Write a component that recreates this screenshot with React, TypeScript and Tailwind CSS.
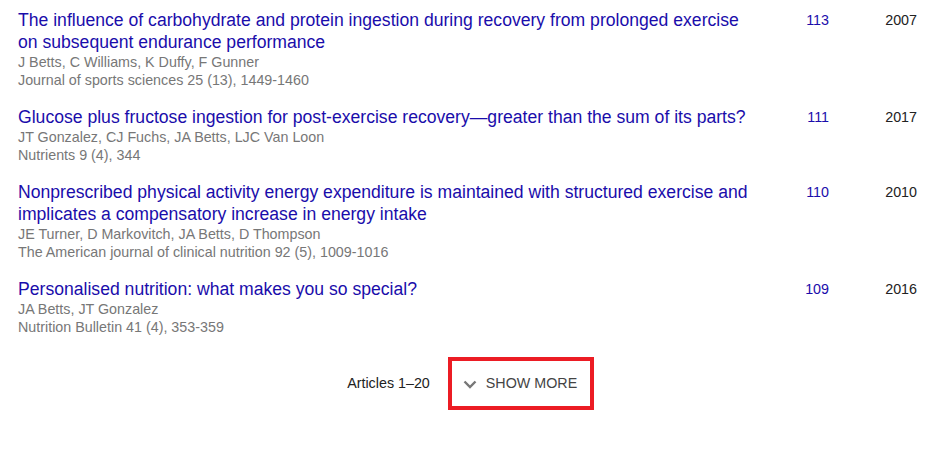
import React from "react";

type Article = {
  title: string;
  authors: string;
  venue: string;
  cited: number;
  year: number;
};

const articles: Article[] = [
  {
    title:
      "The influence of carbohydrate and protein ingestion during recovery from prolonged exercise on subsequent endurance performance",
    authors: "J Betts, C Williams, K Duffy, F Gunner",
    venue: "Journal of sports sciences 25 (13), 1449-1460",
    cited: 113,
    year: 2007,
  },
  {
    title: "Glucose plus fructose ingestion for post-exercise recovery\u2014greater than the sum of its parts?",
    authors: "JT Gonzalez, CJ Fuchs, JA Betts, LJC Van Loon",
    venue: "Nutrients 9 (4), 344",
    cited: 111,
    year: 2017,
  },
  {
    title:
      "Nonprescribed physical activity energy expenditure is maintained with structured exercise and implicates a compensatory increase in energy intake",
    authors: "JE Turner, D Markovitch, JA Betts, D Thompson",
    venue: "The American journal of clinical nutrition 92 (5), 1009-1016",
    cited: 110,
    year: 2010,
  },
  {
    title: "Personalised nutrition: what makes you so special?",
    authors: "JA Betts, JT Gonzalez",
    venue: "Nutrition Bulletin 41 (4), 353-359",
    cited: 109,
    year: 2016,
  },
];

function ArticleRow({ article }: { article: Article }) {
  return (
    <div className="flex items-start pl-[18px] pt-[9px] pb-[8px]">
      <div className="w-[740px]">
        <a href="#" className="block text-[17.6px] leading-[22px] text-[#1a0dab]">
          {article.title}
        </a>
        <div className="text-[14.3px] leading-[18px] text-[#777]">{article.authors}</div>
        <div className="text-[14.3px] leading-[18px] text-[#777]">{article.venue}</div>
      </div>
      <a href="#" className="w-[71px] text-right text-[14.3px] leading-[22px] text-[#1a0dab]">
        {article.cited}
      </a>
      <div className="w-[88px] text-right text-[14.3px] leading-[22px] text-[#222]">{article.year}</div>
    </div>
  );
}

export default function App() {
  return (
    <div
      className="w-[952px] h-[453px] bg-white"
      style={{ fontFamily: '"Liberation Sans", Arial, sans-serif' }}
    >
      <div className="flex flex-col">
        {articles.map((a) => (
          <ArticleRow key={a.title} article={a} />
        ))}
      </div>

      {/* Footer: count + expand button */}
      <div className="flex items-center justify-center pr-[11px] mt-[13px]">
        <span className="text-[14.3px] text-[#222]">Articles 1–20</span>
        <button className="ml-[18px] flex items-center h-[53px] w-[146px] border-4 border-[#ec1c24] pl-[11px]">
          <svg width="14" height="14" viewBox="0 0 14 14" className="mr-[9px]">
            <path d="M1.5 4.5 L7 10 L12.5 4.5" fill="none" stroke="#777" strokeWidth="2.4" />
          </svg>
          <span className="text-[14.3px] text-[#444] uppercase">Show more</span>
        </button>
      </div>
    </div>
  );
}
